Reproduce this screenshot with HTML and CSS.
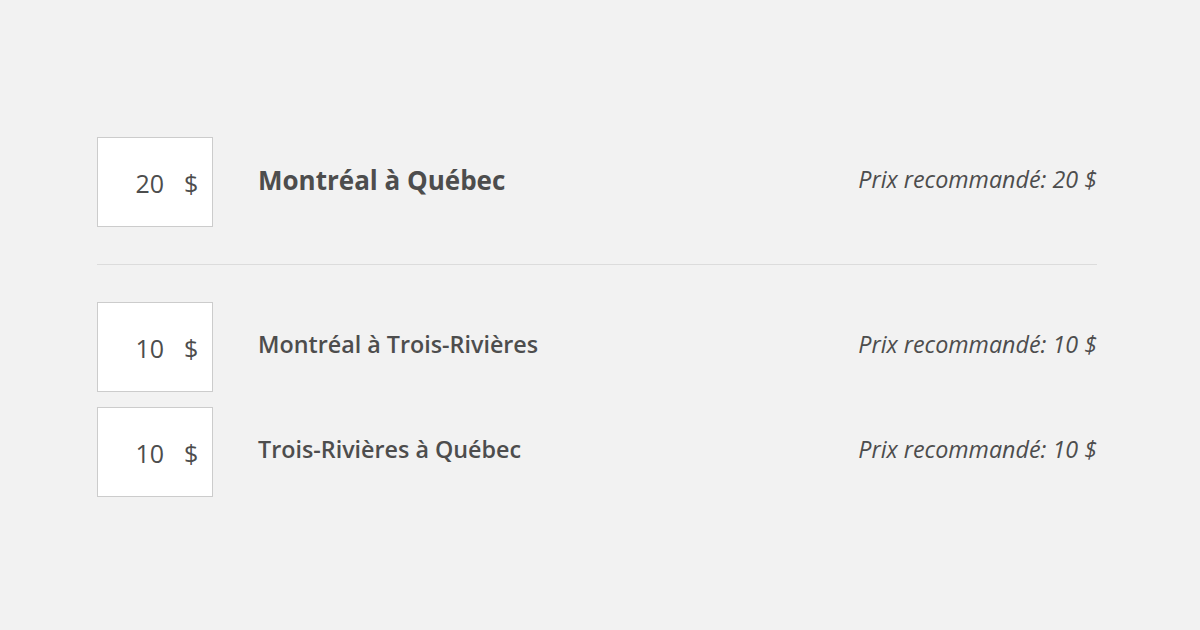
FILE: index.html
```html
<!DOCTYPE html>
<html lang="fr">
<head>
  <meta charset="UTF-8">
  <meta name="viewport" content="width=device-width, initial-scale=1.0">
  <title>Prix des trajets</title>
  <link rel="stylesheet" href="styles.css">
</head>
<body>
  <div class="trips">
    <div class="trip trip-main">
      <label class="price-box">
        <input type="text" class="price-input" value="20">
        <span class="currency">$</span>
      </label>
      <div class="trip-name">Montréal à Québec</div>
      <div class="trip-reco">Prix recommandé: 20 $</div>
    </div>

    <hr class="divider">

    <div class="trip">
      <label class="price-box">
        <input type="text" class="price-input" value="10">
        <span class="currency">$</span>
      </label>
      <div class="trip-name">Montréal à Trois-Rivières</div>
      <div class="trip-reco">Prix recommandé: 10 $</div>
    </div>
    <div class="trip">
      <label class="price-box">
        <input type="text" class="price-input" value="10">
        <span class="currency">$</span>
      </label>
      <div class="trip-name">Trois-Rivières à Québec</div>
      <div class="trip-reco">Prix recommandé: 10 $</div>
    </div>
  </div>
</body>
</html>
```

FILE: styles.css
```css
body {
  margin: 0;
  background-color: #f2f2f2;
  font-family: "Open Sans", sans-serif;
  color: #4d4d4d;
}
.trips {
  width: 1000px;
  padding: 137px 0 0 97px;
  display: flex;
  flex-direction: column;
}
.trip {
  display: flex;
  align-items: center;
  margin-bottom: 15px;
}
.trip-main {
  margin-bottom: 0;
}
.price-box {
  box-sizing: border-box;
  width: 116px;
  height: 90px;
  background-color: #fff;
  border: 1px solid #cccccc;
  display: flex;
  align-items: center;
  padding: 2px 15px 0 0;
}
.price-input {
  width: 66px;
  border: none;
  outline: none;
  background: transparent;
  text-align: right;
  font-family: "Open Sans", sans-serif;
  font-size: 25px;
  color: #4d4d4d;
  padding: 0;
}
.currency {
  margin-left: 20px;
  font-size: 25px;
}
.trip-name {
  flex: 1;
  margin: 0 0 6px 45px;
  font-size: 23.3px;
  font-weight: 600;
}
.trip-main .trip-name {
  margin-bottom: 5px;
  font-size: 26px;
  font-weight: 700;
}
.trip-reco {
  margin-bottom: 6px;
  font-size: 23.3px;
  font-style: italic;
}
.divider {
  width: 100%;
  border: none;
  border-top: 1px solid #dcdcdc;
  margin: 37px 0 37px 0;
}
```
